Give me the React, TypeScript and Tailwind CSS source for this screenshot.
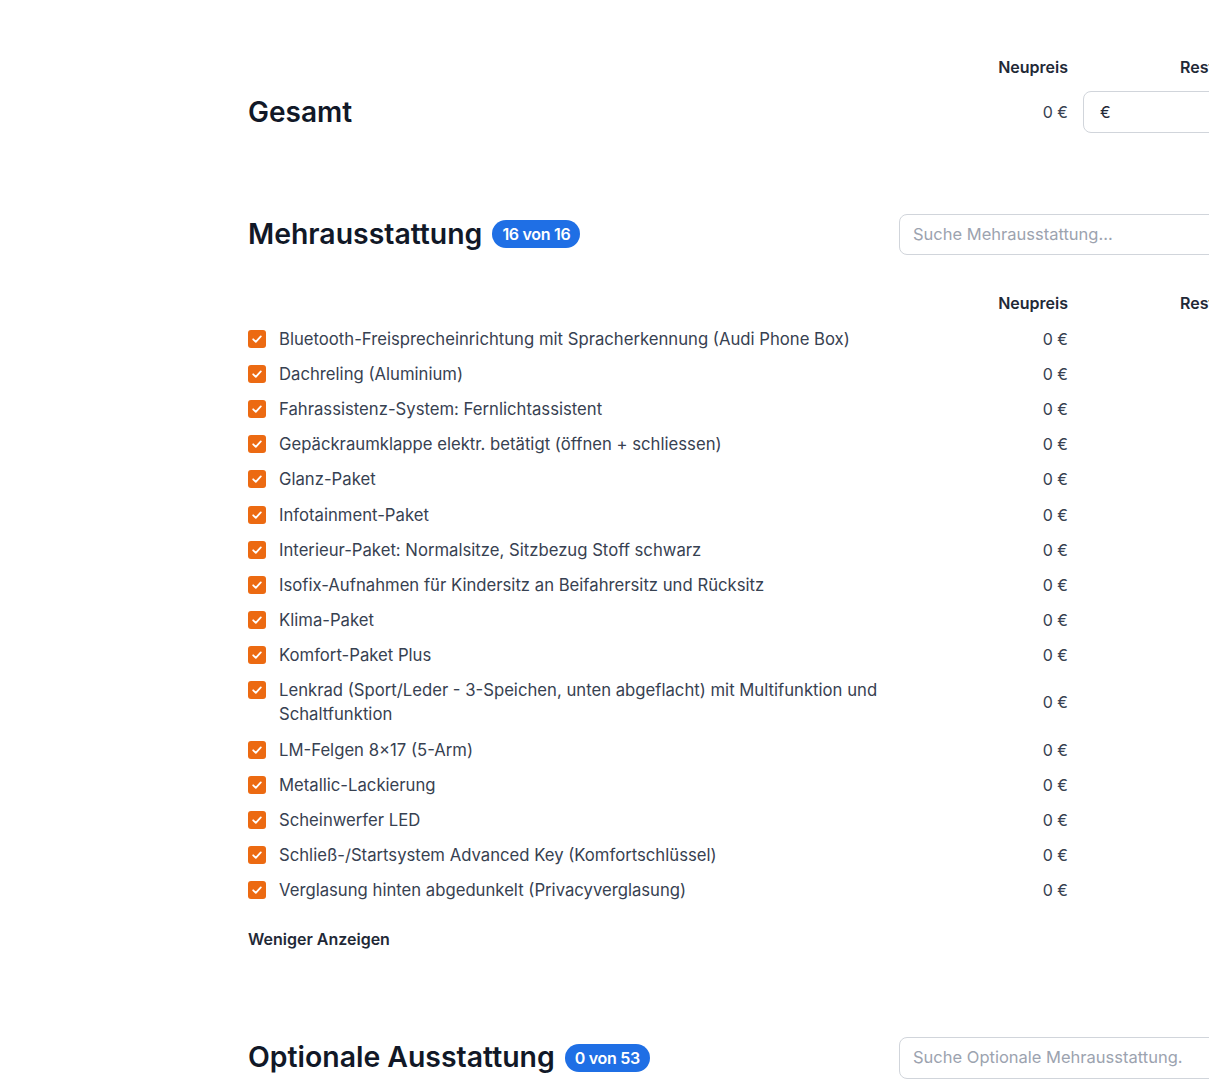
import React from 'react';

const items = [
  'Bluetooth-Freisprecheinrichtung mit Spracherkennung (Audi Phone Box)',
  'Dachreling (Aluminium)',
  'Fahrassistenz-System: Fernlichtassistent',
  'Gepäckraumklappe elektr. betätigt (öffnen + schliessen)',
  'Glanz-Paket',
  'Infotainment-Paket',
  'Interieur-Paket: Normalsitze, Sitzbezug Stoff schwarz',
  'Isofix-Aufnahmen für Kindersitz an Beifahrersitz und Rücksitz',
  'Klima-Paket',
  'Komfort-Paket Plus',
  'Lenkrad (Sport/Leder - 3-Speichen, unten abgeflacht) mit Multifunktion und Schaltfunktion',
  'LM-Felgen 8×17 (5-Arm)',
  'Metallic-Lackierung',
  'Scheinwerfer LED',
  'Schließ-/Startsystem Advanced Key (Komfortschlüssel)',
  'Verglasung hinten abgedunkelt (Privacyverglasung)',
];

const COLS = 'grid grid-cols-[637px_168px_172px] gap-x-[15px]';

function Checkbox() {
  return (
    <span className="mt-[3px] flex h-[18px] w-[18px] flex-shrink-0 items-center justify-center rounded-[3px] bg-[#ec6a12]">
      <svg width="12" height="12" viewBox="0 0 12 12" fill="none">
        <polyline points="2.2,6.3 4.8,8.8 9.8,3.4" stroke="white" strokeWidth="1.8" strokeLinecap="round" strokeLinejoin="round" />
      </svg>
    </span>
  );
}

function Badge({ children }: { children: React.ReactNode }) {
  return (
    <span className="inline-flex h-[28px] items-center rounded-full bg-[#1f6fe5] px-[10px] text-[16px] font-semibold tracking-[-0.3px] text-white">
      {children}
    </span>
  );
}

function ColumnHeader() {
  return (
    <div className={`${COLS} h-6 items-center text-[16px] font-semibold text-[#1f2937]`}>
      <div />
      <div className="text-right">Neupreis</div>
      <div className="pl-[97px]">Restwert</div>
    </div>
  );
}

export default function App() {
  return (
    <div className="h-[1080px] w-full overflow-hidden bg-white" style={{ fontFamily: 'Inter, "Noto Sans", sans-serif' }}>
      <div className="w-[1260px] pl-[248px] pt-[55px]">
        {/* Gesamt */}
        <ColumnHeader />
        <div className={`${COLS} mt-[12px] items-center`}>
          <h2 className="text-[28px] font-semibold text-[#111827]">Gesamt</h2>
          <div className="text-right text-[16px] text-[#374151]">0 €</div>
          <div className="flex h-[42px] items-center rounded-lg border border-[#d1d5db] px-[16px] text-[16px] text-[#1f2937]">€</div>
        </div>

        {/* Mehrausstattung */}
        <div className={`${COLS} mt-[80px] items-center`}>
          <div className="flex items-center gap-[10px]">
            <h2 className="text-[28.4px] font-semibold text-[#111827]">Mehrausstattung</h2>
            <Badge>16 von 16</Badge>
          </div>
          <div className="col-span-2 -ml-[1px] flex h-[41px] items-center rounded-lg border border-[#d1d5db] px-[13px] text-[16.5px] text-[#9ca3af]">
            Suche Mehrausstattung...
          </div>
        </div>

        <div className="mt-[35px]">
          <ColumnHeader />
        </div>

        <div className="mt-[12px] flex flex-col gap-[11.2px]">
          {items.map(label => (
            <div key={label} className={`${COLS} items-center`}>
              <div className="flex items-start gap-[13px]">
                <Checkbox />
                <span className="text-[16.7px] leading-6 text-[#374151]">{label}</span>
              </div>
              <div className="text-right text-[16px] text-[#374151]">0 €</div>
              <div />
            </div>
          ))}
        </div>

        <button className="mt-[25px] h-6 text-[16px] font-semibold text-[#1f2937]">Weniger Anzeigen</button>

        {/* Optionale Ausstattung */}
        <div className={`${COLS} mt-[85px] items-center`}>
          <div className="flex items-center gap-[10px]">
            <h2 className="text-[28.4px] font-semibold text-[#111827]">Optionale Ausstattung</h2>
            <Badge>0 von 53</Badge>
          </div>
          <div className="col-span-2 -ml-[1px] flex h-[42px] items-center rounded-lg border border-[#d1d5db] px-[13px] text-[16.5px] text-[#9ca3af]">
            Suche Optionale Mehrausstattung.
          </div>
        </div>
      </div>
    </div>
  );
}
